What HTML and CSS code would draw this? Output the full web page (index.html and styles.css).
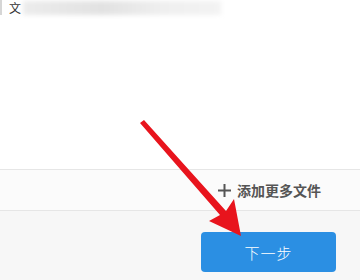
FILE: index.html
```html
<!DOCTYPE html>
<html lang="zh-CN">
<head>
    <meta charset="UTF-8">
    <title>上传文件</title>
    <link rel="stylesheet" href="styles.css">
</head>
<body>
    <div class="page">
        <section class="file-list">
            <div class="file-item">
                <span class="file-name">文</span>
                <span class="file-blur"></span>
            </div>
        </section>

        <div class="add-row">
            <svg class="add-plus" width="13" height="13" viewBox="0 0 13 13">
                <path d="M6.5 0 V13 M0 6.5 H13" stroke="#555" stroke-width="2" fill="none"/>
            </svg>
            <span class="add-text">添加更多文件</span>
        </div>

        <footer class="actions">
            <button class="btn-next">下一步</button>
        </footer>

        <!-- red pointer drawn over the page -->
        <svg class="pointer" width="360" height="280" viewBox="0 0 360 280">
            <path d="M140 123 L144 120 L226 211 L234 199 L241 236 L209 221 L220 215 Z" fill="#e8141d"/>
        </svg>
    </div>
</body>
</html>
```

FILE: styles.css
```css
body {
    margin: 0;
    padding: 0;
    background: #fff;
    font-family: "Noto Sans CJK SC", "Noto Sans", sans-serif;
}
.page {
    position: relative;
    width: 360px;
    height: 280px;
    overflow: hidden;
}
.file-list {
    height: 169px;
    background: #fff;
}
.file-item {
    display: flex;
    align-items: center;
    height: 15px;
    border-left: 2px solid #d6d6d6;
    padding-left: 7px;
}
.file-name {
    font-size: 12px;
    line-height: 15px;
    color: #333;
}
.file-blur {
    width: 198px;
    height: 14px;
    margin-left: 2px;
    background: linear-gradient(90deg, #ececec, #e2e2e2 40%, #efefef 70%, #f3f3f3);
    filter: blur(2px);
}
.add-row {
    display: flex;
    align-items: center;
    justify-content: flex-end;
    height: 40px;
    padding-right: 39px;
    background: #fbfbfb;
    border-top: 1px solid #e6e6e6;
    border-bottom: 1px solid #e6e6e6;
    color: #555;
}
.add-plus {
    margin-right: 6px;
}
.add-text {
    font-size: 14px;
    font-weight: bold;
    color: #555;
}
.actions {
    display: flex;
    justify-content: flex-end;
    height: 69px;
    padding: 21px 24px 0 0;
    box-sizing: border-box;
    background: #f7f7f7;
}
.btn-next {
    width: 135px;
    height: 40px;
    border: none;
    border-radius: 4px;
    background: #2b8fe3;
    color: #fff;
    font-family: "Noto Sans CJK SC", sans-serif;
    font-size: 15px;
    font-weight: 300;
    letter-spacing: 1px;
}
.pointer {
    position: absolute;
    left: 0;
    top: 0;
    pointer-events: none;
}
```
